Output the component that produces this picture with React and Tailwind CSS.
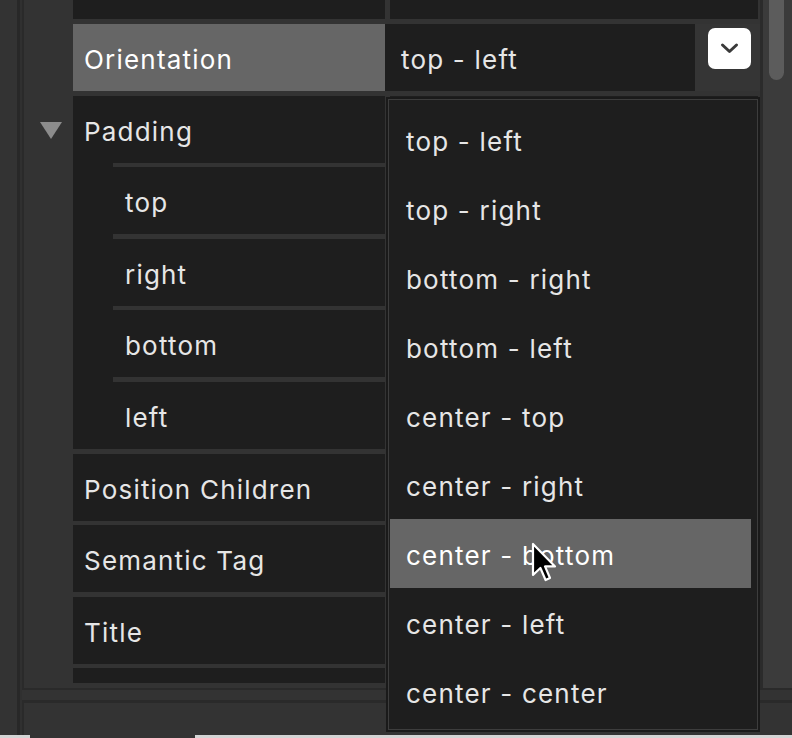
import React from "react";

const items = [
  "top - left",
  "top - right",
  "bottom - right",
  "bottom - left",
  "center - top",
  "center - right",
  "center - bottom",
  "center - left",
  "center - center",
];

function Row({ label, nested, triangle, tall = true }) {
  return (
    <div className={`flex shrink-0 ${tall ? "h-[67px]" : "h-[15px]"}`}>
      <div className="w-[49px] shrink-0 pl-[16px] pt-[26px]">
        {triangle && (
          <svg width="22" height="17" viewBox="0 0 22 17">
            <polygon points="0,0 22,0 11,17" fill="#8c8c8c" />
          </svg>
        )}
      </div>
      {nested ? (
        <div className="flex w-[312px] shrink-0 items-end">
          <div className="h-[71.6px] w-[40px] shrink-0 bg-[#1e1e1e]" />
          <div className="flex h-full flex-1 items-center bg-[#1e1e1e] pl-[12px] pt-[5px]">
            {label}
          </div>
        </div>
      ) : (
        <div className="flex w-[312px] shrink-0 items-center bg-[#1e1e1e] pl-[11px] pt-[5px]">
          {label}
        </div>
      )}
      <div className="ml-[5px] w-[368px] shrink-0 bg-[#1e1e1e]" />
    </div>
  );
}

export default function App() {
  return (
    <div className="relative h-[738px] w-[792px] overflow-hidden bg-[#333333] font-['Inter','Noto_Sans',sans-serif] text-[26px] leading-none tracking-[1.2px] text-[#e6e6e6]">
      <div className="flex h-[735px]">
        <div className="w-[17px] shrink-0 bg-[#333333]" />
        <div className="w-[3px] shrink-0 bg-[#282828]" />
        <div className="w-[2px] shrink-0 bg-[#303030]" />
        <div className="flex flex-1 flex-col">
          <div className="flex h-[690px] shrink-0">
            <div className="flex w-[738px] shrink-0 flex-col gap-[4.6px] overflow-hidden border-b-2 border-l-2 border-[#2a2a2a]">
              {/* partial top row */}
              <div className="flex h-[19.4px] shrink-0">
                <div className="w-[49px] shrink-0" />
                <div className="w-[312px] shrink-0 bg-[#1e1e1e]" />
                <div className="ml-[5px] w-[368px] shrink-0 bg-[#1e1e1e]" />
              </div>
              {/* Orientation */}
              <div className="flex h-[67px] shrink-0">
                <div className="w-[49px] shrink-0" />
                <div className="flex w-[312px] shrink-0 items-center bg-[#666666] pl-[11px] pt-[5px] text-white">
                  Orientation
                </div>
                <div className="flex w-[310px] shrink-0 items-center bg-[#1e1e1e] pl-[16px] pt-[5px]">
                  top - left
                </div>
                <div className="w-[65px] shrink-0 bg-[#353535] pl-[13px] pt-[4px]">
                  <div className="h-[41px] w-[43px] rounded-[7px] bg-white">
                    <svg width="43" height="41" viewBox="0 0 43 41">
                      <polyline
                        points="14.5,17 21.5,23.5 28.5,17"
                        fill="none"
                        stroke="#3a3a3a"
                        strokeWidth="3"
                        strokeLinecap="round"
                        strokeLinejoin="round"
                      />
                    </svg>
                  </div>
                </div>
              </div>
              <Row label="Padding" triangle />
              <Row label="top" nested />
              <Row label="right" nested />
              <Row label="bottom" nested />
              <Row label="left" nested />
              <Row label="Position Children" />
              <Row label="Semantic Tag" />
              <Row label="Title" />
              <Row label="" tall={false} />
            </div>
            {/* scrollbar */}
            <div className="flex w-[32px] shrink-0 border-b-2 border-[#2a2a2a]">
              <div className="w-[3px] bg-[#2b2b2b]" />
              <div className="flex-1 bg-[#3b3b3b] pl-[6px]">
                <div className="-mt-[10px] h-[90px] w-[15px] rounded-full bg-[#5c5c5c]" />
              </div>
            </div>
          </div>
          <div className="h-[10px] shrink-0" />
          <div className="flex-1 border-l-2 border-t-[3px] border-[#2a2a2a]" />
        </div>
      </div>
      <div className="flex h-[3px]">
        <div className="w-[30px] bg-[#d4d4d4]" />
        <div className="w-[165px] bg-[#333333]" />
        <div className="flex-1 bg-[#d4d4d4]" />
      </div>

      {/* dropdown menu */}
      <div className="absolute left-[386px] top-[97px] h-[635px] w-[374px] bg-[#1a1a1a] p-[2px]">
        <div className="h-full border border-[#3d3d3d] bg-[#1e1e1e] pl-[1px] pr-[6px] pt-[5px]">
          {items.map((it) => (
            <div
              key={it}
              className={`flex h-[69px] items-center pl-[16px] pt-[5px] ${
                it === "center - bottom" ? "bg-[#666666] text-white" : ""
              }`}
            >
              {it}
            </div>
          ))}
        </div>
      </div>

      {/* mouse cursor */}
      <svg
        className="absolute left-[530px] top-[541px]"
        width="28"
        height="44"
        viewBox="0 0 14 22"
      >
        <path
          d="M1.5 1.5 L1.5 17 L5.2 13.5 L7.8 19.5 L10 18.5 L7.5 12.7 L12.5 12.7 Z"
          fill="#000"
          stroke="#fff"
          strokeWidth="1.1"
          strokeLinejoin="round"
        />
      </svg>
    </div>
  );
}
